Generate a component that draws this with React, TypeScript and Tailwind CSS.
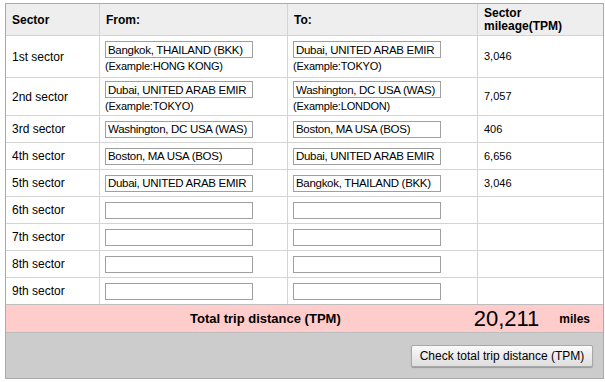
const filled = [
  { label: '1st sector', from: 'Bangkok, THAILAND (BKK)', to: 'Dubai, UNITED ARAB EMIR', fromHint: '(Example:HONG KONG)', toHint: '(Example:TOKYO)', tpm: '3,046' },
  { label: '2nd sector', from: 'Dubai, UNITED ARAB EMIR', to: 'Washington, DC USA (WAS)', fromHint: '(Example:TOKYO)', toHint: '(Example:LONDON)', tpm: '7,057' },
  { label: '3rd sector', from: 'Washington, DC USA (WAS)', to: 'Boston, MA USA (BOS)', tpm: '406' },
  { label: '4th sector', from: 'Boston, MA USA (BOS)', to: 'Dubai, UNITED ARAB EMIR', tpm: '6,656' },
  { label: '5th sector', from: 'Dubai, UNITED ARAB EMIR', to: 'Bangkok, THAILAND (BKK)', tpm: '3,046' },
  { label: '6th sector', from: '', to: '', tpm: '' },
  { label: '7th sector', from: '', to: '', tpm: '' },
  { label: '8th sector', from: '', to: '', tpm: '' },
  { label: '9th sector', from: '', to: '', tpm: '' },
]

const cols = 'grid grid-cols-[93px_188px_190px_126px]'

function CityInput({ value, hint }: { value: string; hint?: string }) {
  return (
    <div className="flex flex-col">
      <input
        readOnly
        value={value}
        className="h-[17px] w-[148px] border border-[#a0a0a0] bg-white px-[2px] text-[11.5px] leading-[15px] tracking-[-0.3px] text-black outline-none"
      />
      {hint && <span className="mt-[2px] text-[11px] leading-[12px] tracking-[-0.2px]">{hint}</span>}
    </div>
  )
}

export default function App() {
  return (
    <div className="min-h-screen bg-white pt-[3px] pl-[5px] font-['Liberation_Sans',Arial,sans-serif] text-[12px] text-black">
      <div className="w-[599px] border border-[#aaaaaa]">
        <div className={`${cols} h-[31px] bg-[#eeeeee] font-bold`}>
          <div className="flex items-center pl-[6px]">Sector</div>
          <div className="flex items-center border-l border-[#d4d4d4] pl-[6px]">From:</div>
          <div className="flex items-center border-l border-[#d4d4d4] pl-[6px]">To:</div>
          <div className="flex items-center border-l border-[#d4d4d4] pl-[6px] leading-[13px]">
            Sector
            <br />
            mileage(TPM)
          </div>
        </div>

        {filled.map((row, i) => (
          <div
            key={row.label}
            className={`${cols} border-t border-[#d4d4d4] ${i === 0 ? 'h-[42px]' : i === 1 ? 'h-[38px]' : 'h-[27px]'}`}
          >
            <div className="flex items-center pl-[6px]">{row.label}</div>
            <div className="flex items-center border-l border-[#d4d4d4] pl-[5px]">
              <CityInput value={row.from} hint={row.fromHint} />
            </div>
            <div className="flex items-center border-l border-[#d4d4d4] pl-[5px]">
              <CityInput value={row.to} hint={row.toHint} />
            </div>
            <div className="flex items-center border-l border-[#d4d4d4] pl-[6px] text-[11px]">{row.tpm}</div>
          </div>
        ))}

        <div className="flex h-[28px] items-center border-t border-[#bdbdbd] bg-[#ffcccc]">
          <span className="pl-[184px] text-[13px] font-bold">Total trip distance (TPM)</span>
          <span className="ml-auto text-[22px] leading-none">20,211</span>
          <span className="ml-[20px] mr-[13px] font-bold">miles</span>
        </div>

        <div className="flex h-[46px] items-center justify-end border-t border-[#bdbdbd] bg-[#cccccc] pr-[10px]">
          <button className="h-[22px] w-[182px] rounded-[2px] border border-[#a8a8a8] bg-gradient-to-b from-[#fafafa] to-[#dedede] text-[12px] text-black shadow-[0_1px_1px_rgba(0,0,0,0.25)]">
            Check total trip distance (TPM)
          </button>
        </div>
      </div>
    </div>
  )
}
